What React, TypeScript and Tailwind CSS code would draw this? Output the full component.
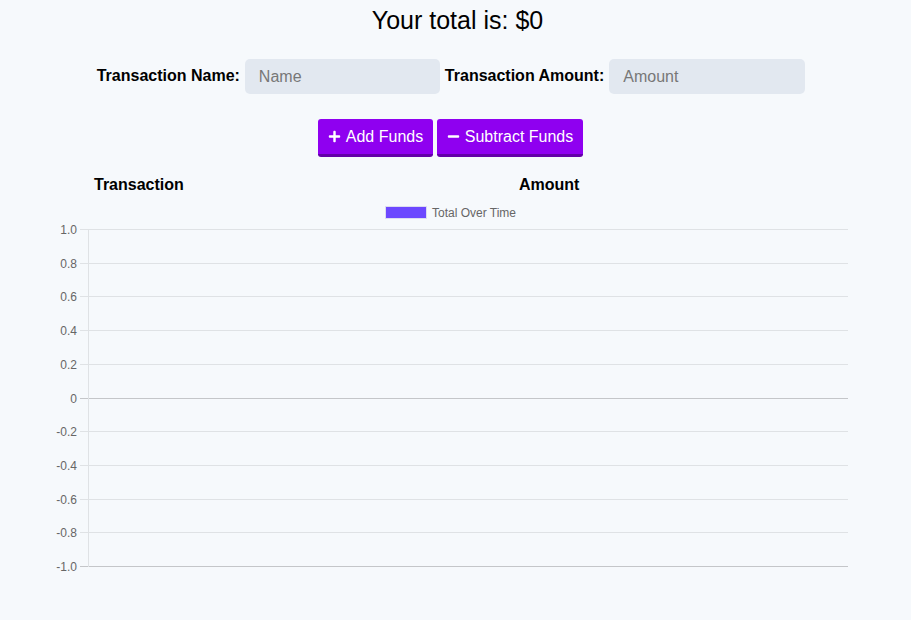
import { FaPlus, FaMinus } from "react-icons/fa";

const ticks = [1, 0.8, 0.6, 0.4, 0.2, 0, -0.2, -0.4, -0.6, -0.8, -1];

function Chart() {
  const top = 29;
  const bottom = 366;
  const step = (bottom - top) / 10;
  return (
    <svg width="911" height="380" className="block" style={{ fontFamily: "'Liberation Sans', Arial, sans-serif" }}>
      {/* legend */}
      <rect x="385.5" y="6.5" width="41" height="12" fill="#6c48ff" stroke="#dcdcf0" strokeWidth="1" />
      <text x="432" y="17" fontSize="12" fill="#666">Total Over Time</text>

      {/* grid + y labels */}
      {ticks.map((t, i) => {
        const y = Math.round(top + i * step) + 0.5;
        const strong = t === 0 || i === ticks.length - 1;
        const label = t === 0 ? "0" : t.toFixed(1);
        return (
          <g key={i}>
            <line x1="80" x2="848" y1={y} y2={y} stroke={strong ? "#c4c6c9" : "#dfe2e5"} strokeWidth="1" />
            <text x="77" y={y + 4} fontSize="12" fill="#666" textAnchor="end">
              {label}
            </text>
          </g>
        );
      })}
      <line x1="88.5" x2="88.5" y1={top} y2={bottom + 1} stroke="#dfe2e5" strokeWidth="1" />
    </svg>
  );
}

export default function App() {
  return (
    <div
      className="min-h-[620px] w-full bg-[#f6f9fc] text-black"
      style={{ fontFamily: "'Liberation Sans', Arial, sans-serif" }}
    >
      <h1 className="text-center text-[25px] leading-[28px] pt-[6px] pl-[4px]">Your total is: $0</h1>

      {/* form */}
      <div className="flex justify-center items-center gap-[5px] pr-[9px] mt-[25px]">
        <label className="font-bold text-[16px] -mt-[2px]">Transaction Name:</label>
        <input
          placeholder="Name"
          className="w-[195px] h-[35px] rounded-[5px] bg-[#e2e8f0] px-[14px] text-[16px] placeholder:text-[#777] outline-none"
        />
        <label className="font-bold text-[16px] -mt-[2px]">Transaction Amount:</label>
        <input
          placeholder="Amount"
          className="w-[196px] h-[35px] rounded-[5px] bg-[#e2e8f0] px-[14px] text-[16px] placeholder:text-[#777] outline-none"
        />
      </div>

      {/* buttons */}
      <div className="flex justify-center gap-[4px] pr-[10px] mt-[25px]">
        <button className="flex items-center gap-[5px] h-[38px] w-[115px] justify-center rounded-[3px] bg-[#8f00f0] border-b-[3px] border-[#6300a8] text-white text-[16px]">
          <FaPlus size={13} />
          Add Funds
        </button>
        <button className="flex items-center gap-[5px] h-[38px] w-[146px] justify-center rounded-[3px] bg-[#8f00f0] border-b-[3px] border-[#6300a8] text-white text-[16px]">
          <FaMinus size={13} />
          Subtract Funds
        </button>
      </div>

      {/* table header */}
      <div className="flex pl-[94px] mt-[15px] h-[25px] items-center font-bold text-[16px]">
        <div className="w-[425px]">Transaction</div>
        <div>Amount</div>
      </div>

      <div className="mt-[3px]">
        <Chart />
      </div>
    </div>
  );
}
